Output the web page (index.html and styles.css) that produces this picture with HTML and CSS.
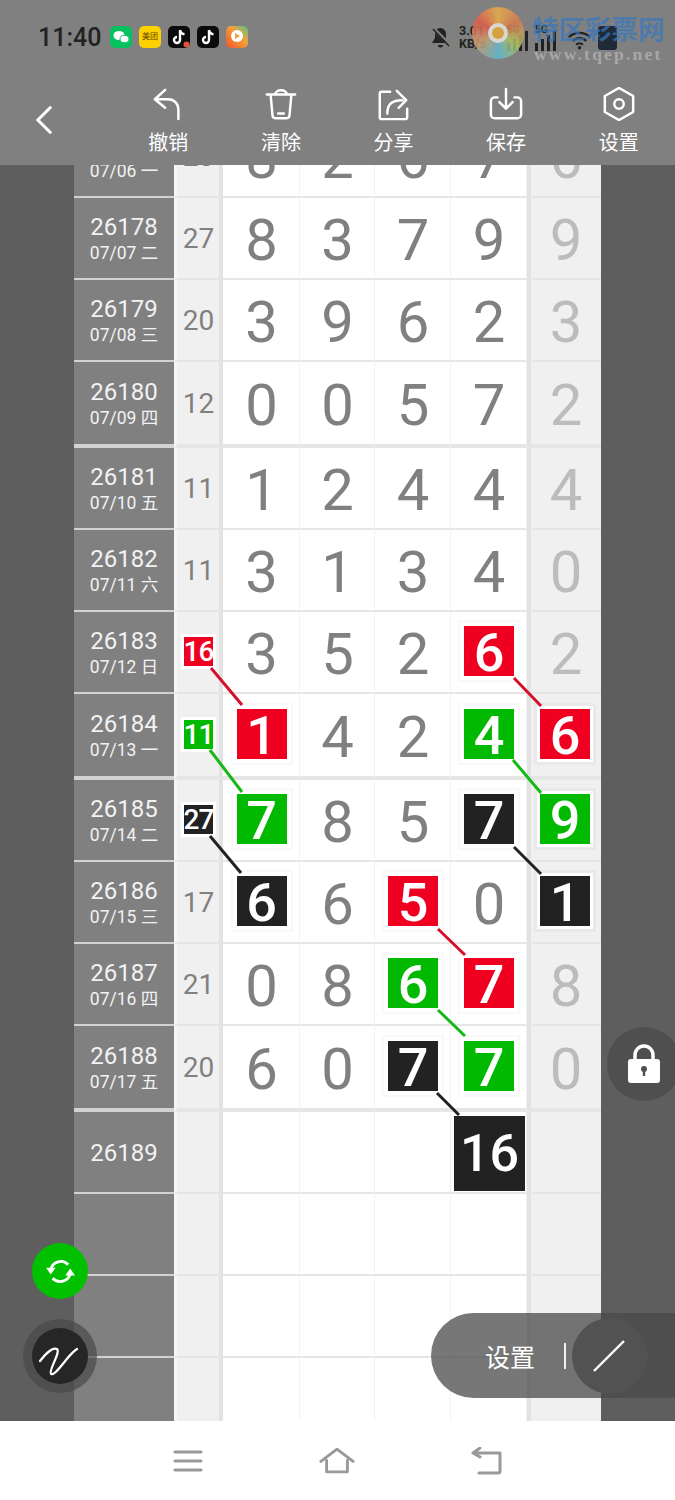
FILE: index.html
```html
<!DOCTYPE html>
<html lang="zh">
<head>
<meta charset="utf-8">
<title>走势图</title>
<link rel="stylesheet" href="styles.css">
</head>
<body>
<div class="app">
  <header class="header">
    <div class="status">
      <span class="clock">11:40</span>
      <div class="apps">
        <svg class="app-ico" viewBox="0 0 22 22"><rect width="22" height="22" rx="5" fill="#07c160"/><ellipse cx="9" cy="9.5" rx="5.5" ry="4.5" fill="#fff"/><ellipse cx="14.5" cy="13" rx="4.5" ry="3.7" fill="#fff" stroke="#07c160"/></svg>
        <span class="app-mt">美团</span>
        <svg class="app-ico" viewBox="0 0 22 22"><rect width="22" height="22" rx="5" fill="#0b0b0b"/><path d="M12 4v10a3 3 0 1 1-3-3M12 4c.5 2.500 2 4 4.500 4.300" fill="none" stroke="#fff" stroke-width="2.400"/><circle cx="18.500" cy="18.500" r="3" fill="#e8503a"/></svg>
        <svg class="app-ico" viewBox="0 0 22 22"><rect width="22" height="22" rx="5" fill="#0b0b0b"/><path d="M12 4v10a3 3 0 1 1-3-3M12 4c.5 2.500 2 4 4.500 4.300" fill="none" stroke="#fff" stroke-width="2.400"/></svg>
        <svg class="app-ico" viewBox="0 0 22 22"><defs><linearGradient id="vid" x1="0" y1="1" x2="1" y2="0"><stop offset="0" stop-color="#f0542c"/><stop offset=".6" stop-color="#f2a23c"/><stop offset="1" stop-color="#52c08a"/></linearGradient></defs><rect width="22" height="22" rx="5" fill="url(#vid)"/><circle cx="11" cy="10" r="6" fill="#fff"/><path d="M9 7l5 3-5 3z" fill="#f2a23c"/></svg>
      </div>
      <div class="sys">
        <svg class="bell" viewBox="0 0 22 22"><path d="M10 2c4 0 6 3 6 6v5l3 4H2l3-5V8c0-3 2-6 5-6zM8 19h5a2.500 2.500 0 0 1-5 0z" fill="#222"/><path d="M3 2l17 17" stroke="#808080" stroke-width="3.500"/><path d="M3 3l16 17" stroke="#222" stroke-width="1.500"/></svg>
        <span class="speed">3.01<br>KB/s</span>
        <svg class="signal" viewBox="0 0 28 30"><text x="3" y="10" class="g5">5G</text><path d="M3 20h3v8H3zM9 16h3v12H9zM15 12h3v16h-3zM21 8h3v20h-3z" fill="#222"/></svg>
        <svg class="signal" viewBox="0 0 28 30"><text x="3" y="10" class="g5">5G</text><path d="M3 20h3v8H3zM9 16h3v12H9zM15 12h3v16h-3zM21 8h3v20h-3z" fill="#222"/></svg>
        <svg class="wifi" viewBox="0 0 26 20"><path d="M2 7c6-6 16-6 22 0M6 11c4-4 10-4 14 0M9.500 15c2-2 5-2 7 0" fill="none" stroke="#222" stroke-width="2.400"/><circle cx="13" cy="18" r="1.800" fill="#222"/></svg>
        <span class="battery"></span>
      </div>
    </div>
    <div class="watermark">
      <span class="wm-logo"><span class="wm-hole"></span></span>
      <div class="wm-text">
        <span class="wm-name">特区彩票网</span>
        <span class="wm-url">www.tqep.net</span>
      </div>
    </div>
    <nav class="toolbar">
      <svg class="back" viewBox="0 0 20 32"><path d="M17 2L3 16l14 14" fill="none" stroke="#fff" stroke-width="3.200"/></svg>
      <div class="tools">
        <div class="tool">
          <svg class="tool-ico" viewBox="0 0 36 36"><path d="M15 3L4 13l11 9M5 13h13c7 0 11 5 11 11v10" fill="none" stroke="#fff" stroke-width="2.600" stroke-linecap="round" stroke-linejoin="round"/></svg>
          <span>撤销</span>
        </div>
        <div class="tool">
          <svg class="tool-ico" viewBox="0 0 36 36"><path d="M3 8h30M12 8c0-6 12-6 12 0M7 8l2 22a3 3 0 0 0 3 3h12a3 3 0 0 0 3-3l2-22M15 28h6" fill="none" stroke="#fff" stroke-width="2.600" stroke-linecap="round"/></svg>
          <span>清除</span>
        </div>
        <div class="tool">
          <svg class="tool-ico" viewBox="0 0 36 36"><path d="M15 5H6a2 2 0 0 0-2 2v25a2 2 0 0 0 2 2h25a2 2 0 0 0 2-2v-9M12 28c0-10 5-14 16-14M22 4l10 10-8 8" fill="none" stroke="#fff" stroke-width="2.600" stroke-linecap="round" stroke-linejoin="round"/></svg>
          <span>分享</span>
        </div>
        <div class="tool">
          <svg class="tool-ico" viewBox="0 0 36 36"><path d="M9 11H6a4 4 0 0 0-4 4v14a4 4 0 0 0 4 4h24a4 4 0 0 0 4-4V15a4 4 0 0 0-4-4h-3M18 2v20M11 16l7 7 7-7" fill="none" stroke="#fff" stroke-width="2.600" stroke-linecap="round" stroke-linejoin="round"/></svg>
          <span>保存</span>
        </div>
        <div class="tool">
          <svg class="tool-ico" viewBox="0 0 36 36"><path d="M18 1l15 8.500v17L18 35 3 26.500v-17z" fill="none" stroke="#fff" stroke-width="2.600" stroke-linejoin="round"/><circle cx="18" cy="18" r="5" fill="none" stroke="#fff" stroke-width="2.600"/></svg>
          <span>设置</span>
        </div>
      </div>
    </nav>
  </header>

  <main class="stage">
    <div class="board">
      <div class="row"><div class="side"><b>26177</b><i>07/06 一</i></div><div class="sum">23</div><div class="cell">8</div><div class="cell">2</div><div class="cell">6</div><div class="cell">7</div><div class="tail">6</div></div>
      <div class="row"><div class="side"><b>26178</b><i>07/07 二</i></div><div class="sum">27</div><div class="cell">8</div><div class="cell">3</div><div class="cell">7</div><div class="cell">9</div><div class="tail">9</div></div>
      <div class="row"><div class="side"><b>26179</b><i>07/08 三</i></div><div class="sum">20</div><div class="cell">3</div><div class="cell">9</div><div class="cell">6</div><div class="cell">2</div><div class="tail">3</div></div>
      <div class="row group-end"><div class="side"><b>26180</b><i>07/09 四</i></div><div class="sum">12</div><div class="cell">0</div><div class="cell">0</div><div class="cell">5</div><div class="cell">7</div><div class="tail">2</div></div>
      <div class="row"><div class="side"><b>26181</b><i>07/10 五</i></div><div class="sum">11</div><div class="cell">1</div><div class="cell">2</div><div class="cell">4</div><div class="cell">4</div><div class="tail">4</div></div>
      <div class="row"><div class="side"><b>26182</b><i>07/11 六</i></div><div class="sum">11</div><div class="cell">3</div><div class="cell">1</div><div class="cell">3</div><div class="cell">4</div><div class="tail">0</div></div>
      <div class="row"><div class="side"><b>26183</b><i>07/12 日</i></div><div class="sum"><span class="chip red">16</span></div><div class="cell">3</div><div class="cell">5</div><div class="cell">2</div><div class="cell"><span class="mark red">6</span></div><div class="tail">2</div></div>
      <div class="row group-end"><div class="side"><b>26184</b><i>07/13 一</i></div><div class="sum"><span class="chip green">11</span></div><div class="cell"><span class="mark red">1</span></div><div class="cell">4</div><div class="cell">2</div><div class="cell"><span class="mark green">4</span></div><div class="tail"><span class="mark red">6</span></div></div>
      <div class="row"><div class="side"><b>26185</b><i>07/14 二</i></div><div class="sum"><span class="chip black">27</span></div><div class="cell"><span class="mark green">7</span></div><div class="cell">8</div><div class="cell">5</div><div class="cell"><span class="mark black">7</span></div><div class="tail"><span class="mark green">9</span></div></div>
      <div class="row"><div class="side"><b>26186</b><i>07/15 三</i></div><div class="sum">17</div><div class="cell"><span class="mark black">6</span></div><div class="cell">6</div><div class="cell"><span class="mark red">5</span></div><div class="cell">0</div><div class="tail"><span class="mark black">1</span></div></div>
      <div class="row"><div class="side"><b>26187</b><i>07/16 四</i></div><div class="sum">21</div><div class="cell">0</div><div class="cell">8</div><div class="cell"><span class="mark green">6</span></div><div class="cell"><span class="mark red">7</span></div><div class="tail">8</div></div>
      <div class="row group-end"><div class="side"><b>26188</b><i>07/17 五</i></div><div class="sum">20</div><div class="cell">6</div><div class="cell">0</div><div class="cell"><span class="mark black">7</span></div><div class="cell"><span class="mark green">7</span></div><div class="tail">0</div></div>
      <div class="row"><div class="side"><b>26189</b></div><div class="sum"></div><div class="cell"></div><div class="cell"></div><div class="cell"></div><div class="cell"><span class="result">16</span></div><div class="tail"></div></div>
      <div class="row"><div class="side"></div><div class="sum"></div><div class="cell"></div><div class="cell"></div><div class="cell"></div><div class="cell"></div><div class="tail"></div></div>
      <div class="row"><div class="side"></div><div class="sum"></div><div class="cell"></div><div class="cell"></div><div class="cell"></div><div class="cell"></div><div class="tail"></div></div>
      <div class="row"><div class="side"></div><div class="sum"></div><div class="cell"></div><div class="cell"></div><div class="cell"></div><div class="cell"></div><div class="tail"></div></div>
    </div>

    <svg class="links" viewBox="0 165 675 1256">
      <g stroke-width="3">
        <path d="M211 668L242 705M514 678L541 706M438 929L465 955" stroke="#d5102c"/>
        <path d="M210 750L242 792M513 760L541 793M438 1010L465 1036" stroke="#16b816"/>
        <path d="M210 836L241 873M514 847L541 874M437 1093L459 1115" stroke="#222"/>
      </g>
    </svg>

    <button class="lock" type="button" aria-label="锁定">
      <svg viewBox="0 0 34 40" class="lock-ico"><path d="M8 18v-7a9 9 0 0 1 18 0v7" fill="none" stroke="#fff" stroke-width="3.500"/><rect x="1" y="15" width="32" height="24" rx="3" fill="#fff"/><circle cx="17" cy="25" r="3" fill="#4f4f4f"/><path d="M15.800 25h2.400v7h-2.400z" fill="#4f4f4f"/></svg>
    </button>
    <button class="sync" type="button" aria-label="刷新">
      <svg viewBox="0 0 32 32" class="sync-ico"><path d="M6 14a10.500 10.500 0 0 1 18-5M26 18a10.500 10.500 0 0 1-18 5" fill="none" stroke="#fff" stroke-width="3"/><path d="M1 12h10l-5 7zM31 20H21l5-7z" fill="#fff"/></svg>
    </button>
    <button class="pen" type="button" aria-label="画笔">
      <svg viewBox="0 0 56 56" class="pen-ico"><path d="M8 33c6-8 13-14 17-12 4 3-9 22-6 25 3 2 10-8 15-14 4-5 8-9 11-11" fill="none" stroke="#fff" stroke-width="2.200" stroke-linecap="round"/></svg>
    </button>
    <div class="pill">
      <span class="pill-label">设置</span>
      <span class="pill-sep"></span>
      <span class="pill-round"><svg viewBox="0 0 34 32" class="pill-ico"><path d="M2 31L32 1" stroke="#fff" stroke-width="2.400"/></svg></span>
    </div>
  </main>

  <footer class="navbar">
    <svg class="nav-ico" viewBox="0 0 30 24"><path d="M2 3h26M2 12h26M2 21h26" stroke="#999" stroke-width="3.200" stroke-linecap="round"/></svg>
    <svg class="nav-ico" viewBox="0 0 38 28"><path d="M2 15L19 2l17 13M8 14v12h22V14" fill="none" stroke="#999" stroke-width="3" stroke-linecap="round" stroke-linejoin="round"/></svg>
    <svg class="nav-ico" viewBox="0 0 32 28"><path d="M3 6h26v18a2 2 0 0 1-2 2H8M9 1L2 6l7 4" fill="none" stroke="#999" stroke-width="3" stroke-linecap="round" stroke-linejoin="round"/></svg>
  </footer>
</div>
</body>
</html>
```
FILE: styles.css
```css
* { box-sizing: border-box; }
html, body { margin: 0; padding: 0; }
body { font-family: Roboto, "Noto Sans CJK SC", sans-serif; background: #fff; }

.app { position: relative; width: 675px; height: 1500px; display: flex; flex-direction: column; overflow: hidden; }

/* header */
.header { position: relative; height: 165px; flex: none; background: #808080; padding: 24px 0 0 38px; }
.status { display: flex; align-items: center; height: 26px; }
.clock { font-size: 25px; font-weight: 500; color: #222; width: 72px; }
.apps { display: flex; gap: 7px; }
.app-ico { width: 22px; height: 22px; display: block; }
.app-mt { width: 22px; height: 22px; border-radius: 5px; background: #fdd000; color: #5c4300; font-size: 8px; line-height: 22px; text-align: center; }
.sys { display: flex; align-items: center; margin-left: 182px; flex: none; }
.bell { width: 22px; height: 22px; }
.speed { font-size: 12.500px; line-height: 13px; font-weight: 700; color: #222; margin-left: 7px; width: 45px; }
.signal { width: 28px; height: 30px; margin-top: 2px; }
.g5 { font-size: 10px; font-weight: 700; fill: #222; }
.wifi { width: 25px; height: 20px; margin-left: 7px; margin-top: 6px; }
.battery { width: 19px; height: 24px; margin-left: 6px; margin-top: 2px; background: #1f2a38; border-radius: 3px; }

.watermark { position: absolute; left: 472px; top: 7px; display: flex; gap: 8px; }
.wm-logo { width: 52px; height: 52px; border-radius: 50%; opacity: .85; background: conic-gradient(#e8b04a, #d87a50, #b0c060, #60b8d0, #c8a070, #e05a4a, #e8b04a); display: flex; align-items: center; justify-content: center; }
.wm-hole { width: 20px; height: 20px; border-radius: 50%; border: 4px solid #e8e8e0; background: #e6a832; }
.wm-text { display: flex; flex-direction: column; margin-top: 6px; }
.wm-name { font-family: "Noto Sans CJK SC", sans-serif; font-size: 26.500px; line-height: 30px; font-weight: 700; color: rgba(55, 120, 190, .7); white-space: nowrap; }
.wm-url { font-family: "Liberation Serif", serif; font-size: 17.500px; line-height: 18px; font-weight: 700; color: #a8a8a8; letter-spacing: 2.200px; margin: 2px 0 0 2px; white-space: nowrap; }

.toolbar { position: absolute; left: 0; right: 0; top: 86px; display: flex; }
.back { position: absolute; left: 35px; top: 18px; width: 19px; height: 32px; }
.tools { margin-left: 112px; display: flex; }
.tool { width: 112.600px; display: flex; flex-direction: column; align-items: center; gap: 8px; color: #fff; font-size: 20px; line-height: 24px; font-family: "Noto Sans CJK SC", sans-serif; }
.tool-ico { width: 34px; height: 34px; display: block; margin-top: 1px; margin-bottom: 1px; }

/* board */
.stage { position: relative; height: 1256px; flex: none; background: #5e5e5e; overflow: hidden; }
.board { width: 527px; margin: -49px 0 0 74px; }
.row { display: grid; grid-template-columns: 100px 49px 77px 75px 76px 76px 74px; height: 82px; }
.group-end { height: 86px; }
.row > * { display: flex; align-items: center; justify-content: center; border-bottom: 2px solid #e6e6e6; color: #808080; }
.group-end > * { border-bottom-width: 4px; }
.side { flex-direction: column; background: #808080; padding-top: 3px; border-bottom-color: #d2d2d2 !important; color: #f2f2f2 !important; }
.side b { font-weight: 400; font-size: 24px; line-height: 27px; }
.side i { font-style: normal; font-size: 17.500px; line-height: 25px; }
.sum { background: #f0f0f0; border-left: 3px solid #f6f6f6; border-right: 4px solid #e2e2e2; font-size: 28px; padding-left: 1px; }
.cell { background: #fff; border-right: 1px solid #f2f2f2; font-size: 58px; font-weight: 450; padding: 4px 0 0 1px; }
.tail { background: #f0f0f0; border-left: 4px solid #e2e2e2; font-size: 58px; font-weight: 450; color: #bcbcbc !important; padding-top: 4px; }

.mark { width: 50px; height: 50px; display: flex; align-items: center; justify-content: center; color: #fff; font-size: 54px; font-weight: 500; padding-top: 2px; margin-top: -6px; box-shadow: 0 0 0 4px #fff, 0 0 0 6px #f9f9f9; }
.tail .mark { box-shadow: 0 0 0 3px #fff, 0 0 0 6px #e9e9e9; margin-left: -2px; }
.chip { width: 29px; height: 29px; display: flex; align-items: center; justify-content: center; color: #fff; font-size: 28px; font-weight: 500; letter-spacing: -1px; box-shadow: 0 0 0 3px #fff; margin-top: -2px; }
.red { background: #f00020; }
.green { background: #00b900; }
.black { background: #222; }
.result { width: 71px; height: 75px; display: flex; align-items: center; justify-content: center; background: #222; color: #fff; font-size: 52px; font-weight: 500; margin: -2px 0 0 1px; position: relative; z-index: 2; }

.links { position: absolute; left: 0; top: 0; width: 675px; height: 1256px; pointer-events: none; }

/* floating controls */
button { border: 0; padding: 0; cursor: pointer; }
.lock { position: absolute; left: 607px; top: 862px; width: 74px; height: 74px; border-radius: 50%; background: #4f4f4f; display: flex; align-items: center; justify-content: center; }
.lock-ico { width: 34px; height: 40px; margin-left: -1px; }
.sync { position: absolute; left: 32px; top: 1078px; width: 56px; height: 56px; border-radius: 50%; background: #00c000; display: flex; align-items: center; justify-content: center; }
.sync-ico { width: 31px; height: 31px; }
.pen { position: absolute; left: 32px; top: 1163px; width: 56px; height: 56px; border-radius: 50%; background: #262626; box-shadow: 0 0 0 9px rgba(72, 72, 72, .7); display: flex; align-items: center; justify-content: center; }
.pen-ico { width: 56px; height: 56px; }
.pill { position: absolute; left: 431px; top: 1148px; width: 260px; height: 85px; border-radius: 43px 0 0 43px; background: rgba(74, 74, 74, .75); display: flex; align-items: center; padding-left: 54px; color: #fff; }
.pill-label { font-family: "Noto Sans CJK SC", sans-serif; font-size: 25px; line-height: 30px; width: 79px; }
.pill-sep { width: 2px; height: 26px; background: #f0f0f0; }
.pill-round { width: 76px; height: 76px; margin-left: 6px; border-radius: 50%; background: #525252; display: flex; align-items: center; justify-content: center; }
.pill-ico { width: 34px; height: 32px; margin-left: -2px; }

/* bottom bar */
.navbar { flex: 1; background: #fff; display: grid; grid-template-columns: 173px 30px 116px 36px 116px 32px; grid-template-rows: 1fr; align-items: center; }
.nav-ico:nth-child(1) { grid-column: 2; width: 30px; height: 24px; }
.nav-ico:nth-child(2) { grid-column: 4; width: 36px; height: 27px; }
.nav-ico:nth-child(3) { grid-column: 6; width: 32px; height: 28px; }
```
